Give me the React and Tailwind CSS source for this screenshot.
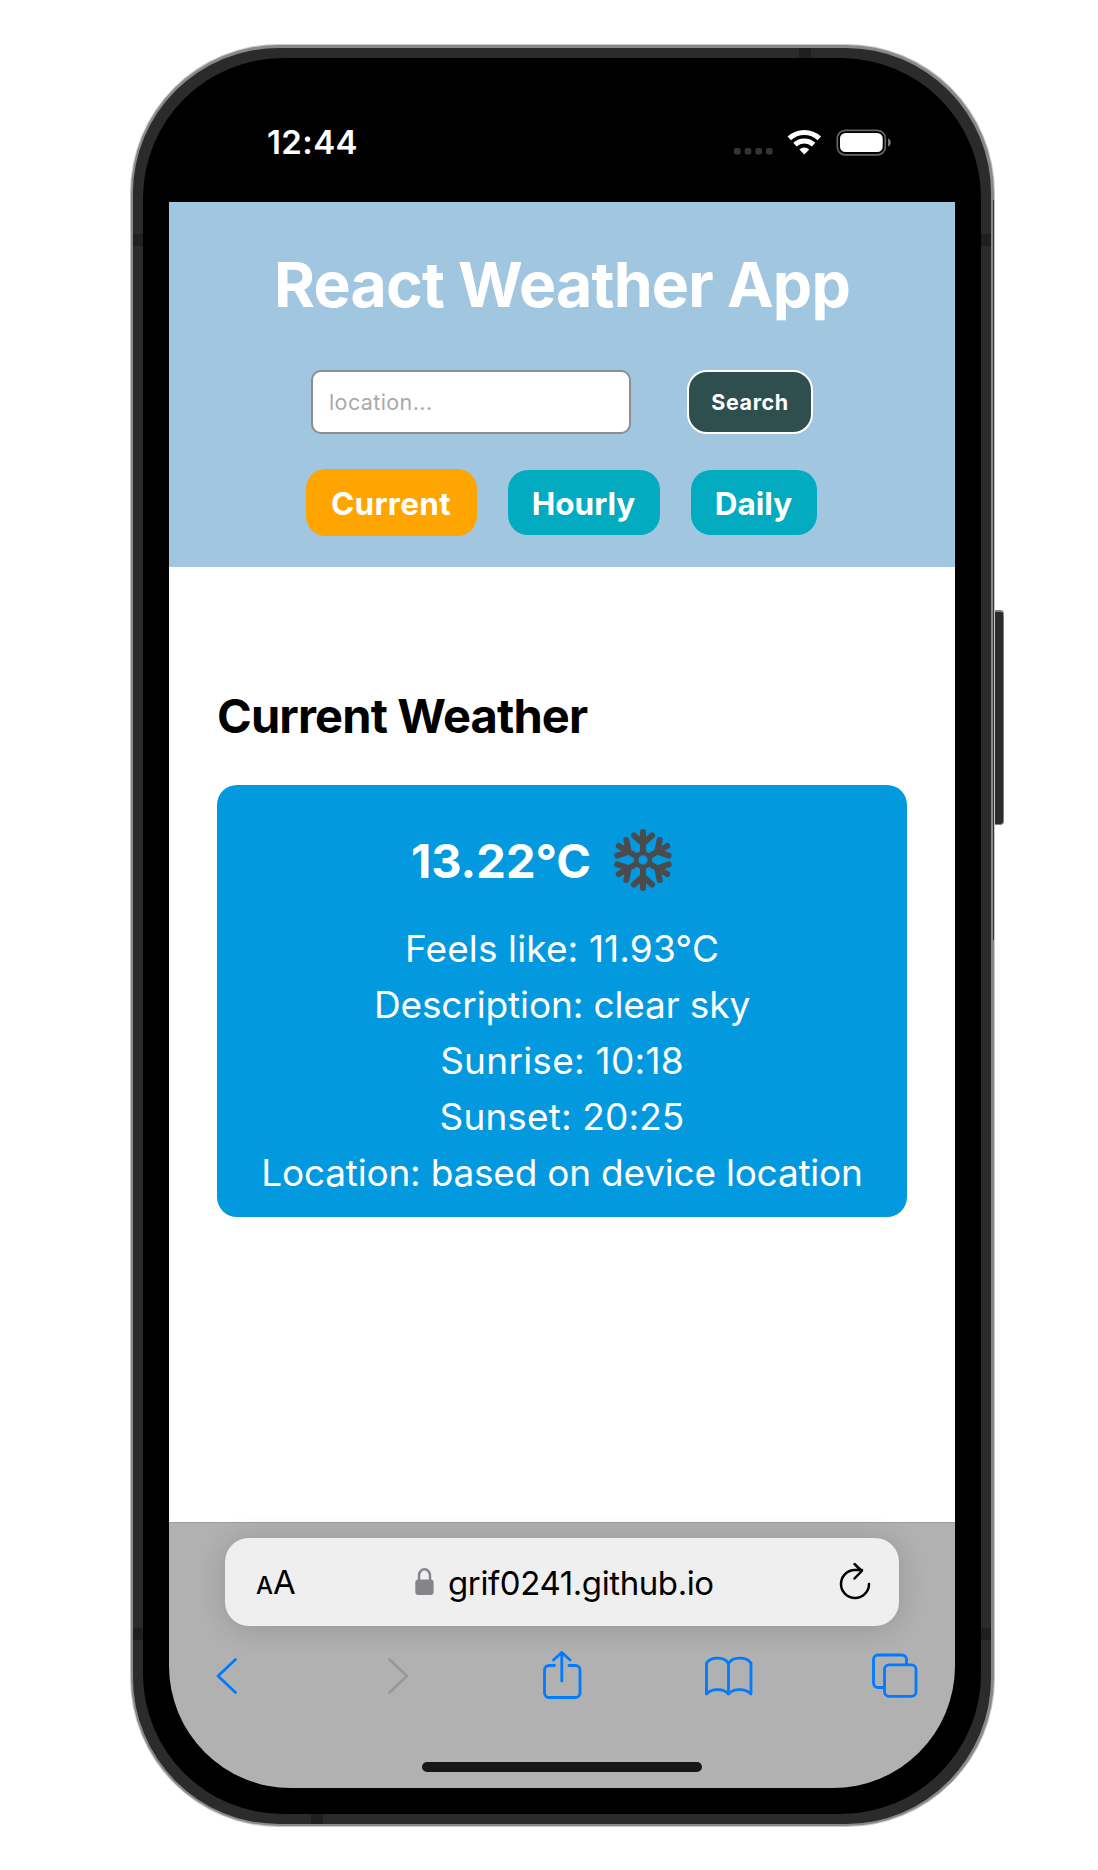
const DETAILS = [
  { text: "Feels like: 11.93°C", tracking: "tracking-[0.13px]" },
  { text: "Description: clear sky", tracking: "tracking-[-0.13px]" },
  { text: "Sunrise: 10:18", tracking: "tracking-[0.26px]" },
  { text: "Sunset: 20:25", tracking: "tracking-[0.12px]" },
  { text: "Location: based on device location", tracking: "tracking-[-0.22px]" },
];

function StatusBar() {
  return (
    <div className="flex h-[144px] items-start pl-[98px] pt-[67px] text-white">
      <span className="w-[92px] whitespace-nowrap text-[33px] font-semibold leading-[34px] tracking-[0.4px]">12:44</span>
      <svg className="ml-[374px] mt-[-1px]" width="160" height="36" viewBox="732 124 160 36" fill="none">
        {[733, 743.7, 754.4, 765].map((x) => (
          <rect key={x} x={x} y="148" width="6.6" height="6.6" rx="2" fill="#353535" />
        ))}
        <path d="M788.3 138.4a22 22 0 0 1 30 0" stroke="white" strokeWidth="5" />
        <path d="M794 144.6a13.7 13.7 0 0 1 18.6 0" stroke="white" strokeWidth="5" />
        <path d="M803.3 154.6l-4.9-5.2a7.2 7.2 0 0 1 9.8 0z" fill="white" />
        <rect x="836.3" y="130.3" width="48" height="24.6" rx="8" stroke="#666" strokeWidth="1.7" />
        <rect x="839" y="133" width="42.7" height="19" rx="5.5" fill="white" />
        <path d="M887 138.5v8c1.8-.5 2.8-2 2.8-4s-1-3.500-2.800-4z" fill="#777" />
      </svg>
    </div>
  );
}

function Header() {
  return (
    <header className="flex h-[365px] flex-col items-center bg-[#a1c6e0]">
      <h1 className="mt-[46px] whitespace-nowrap text-[62.5px] font-bold leading-[72px] tracking-[-0.8px] text-white">React Weather App</h1>
      <div className="mt-[50px] flex w-[502px] justify-between">
        <div className="flex h-[64px] w-[320px] items-center rounded-[10px] border-2 border-[#8d8d93] bg-white pl-[16px] text-[21.500px] tracking-[0.4px] text-[#a9a9a9]">location...</div>
        <button className="h-[64px] w-[126px] rounded-[20px] border-2 border-white bg-[#2f4f4f] pt-px text-[21.500px] font-bold tracking-[0.6px] text-white">Search</button>
      </div>
      <div className="mr-[2px] mt-[35px] flex w-[511px] items-center justify-between text-[31.5px] font-bold text-white">
        <button className="h-[67px] w-[171px] rounded-[20px] bg-[#ffa500] pt-[2px] tracking-[0.3px]">Current</button>
        <button className="h-[65px] w-[152px] rounded-[20px] bg-[#02abbf] pt-[2px]">Hourly</button>
        <button className="h-[65px] w-[126px] rounded-[20px] bg-[#02abbf] pt-[2px]">Daily</button>
      </div>
    </header>
  );
}

function Snowflake() {
  return (
    <svg width="62" height="66" viewBox="-31 -33 62 66" stroke="#4b4b4d" strokeWidth="6" strokeLinecap="round" fill="none">
      {["rotate(0)", "rotate(60)", "rotate(120)", "rotate(180)", "rotate(240)", "rotate(300)"].map((t) => (
        <path key={t} transform={t} d="M0 -8V-28M0 -16.500L-9 -24.500M0 -16.500L9 -24.500" />
      ))}
      <circle r="7" strokeWidth="4.500" />
    </svg>
  );
}

function WeatherCard() {
  return (
    <main className="h-[955px] bg-white px-12 pt-[121px]">
      <h2 className="whitespace-nowrap text-[47px] font-bold leading-[56px] tracking-[-0.85px] text-black">Current Weather</h2>
      <section className="mt-[41px] h-[432px] rounded-[20px] bg-[#0399df] pt-[42px] text-white">
        <div className="flex h-[66px] items-center pl-[194px]">
          <span className="w-[201px] whitespace-nowrap pt-[2px] text-[47px] font-bold leading-[56px]">13.22°C</span>
          <Snowflake />
        </div>
        <div className="mt-[28px] flex flex-col items-center text-[37px] leading-[56px]">
          {DETAILS.map((d) => (
            <p key={d.text} className={"whitespace-nowrap " + d.tracking}>{d.text}</p>
          ))}
        </div>
      </section>
    </main>
  );
}

function BrowserBar() {
  return (
    <footer className="h-[266px] border-t border-[#9c9c9c] bg-[#b1b1b1] pt-[15px]">
      <div className="mx-[56px] flex h-[88px] items-center rounded-[24px] bg-[#efefef] pl-[31px] pr-[25px] text-[33px] text-black shadow-[0_2px_28px_rgba(0,0,0,0.16)]">
        <span className="flex w-[159px] items-baseline pt-[2px]"><span className="text-[24px] font-medium">A</span><span className="text-[33px]">A</span></span>
        <svg width="19" height="28" viewBox="0 0 19 28" fill="none">
          <path d="M4 13V7.500a5.500 6.200 0 0 1 11 0V13" stroke="#858589" strokeWidth="2.400" />
          <rect x="0.300" y="11.500" width="18.300" height="15.500" rx="3" fill="#858589" />
        </svg>
        <span className="ml-[14px] w-[360px] whitespace-nowrap pt-[3px] tracking-[-0.4px]">grif0241.github.io</span>
        <svg className="-mt-1 ml-auto" width="36" height="40" viewBox="838 1560 36 40" fill="none" stroke="black" strokeWidth="2.500" strokeLinecap="round" strokeLinejoin="round">
          <path d="M869 1584a14 14 0 1 1-14-14h7M854.500 1564l7.300 7-7.300 7.500" />
        </svg>
      </div>
      <svg className="mt-[20px]" width="786" height="60" viewBox="169 1646 786 60" fill="none" stroke="#007aff" strokeWidth="2.800" strokeLinecap="round" strokeLinejoin="round">
        <path d="M235.500 1659.500L218 1676l17.500 16.500" />
        <path d="M389.500 1659.500L407 1676l-17.500 16.500" stroke="#999" />
        <path d="M554.500 1665.500H549a4.500 4.500 0 0 0-4.500 4.500v23a4.500 4.500 0 0 0 4.500 4.500h26.500a4.500 4.500 0 0 0 4.500-4.500v-23a4.500 4.500 0 0 0-4.500-4.500H569M561.800 1681v-28.500M553.500 1660l8.300-7.500 8.300 7.500" />
        <path d="M728.500 1663.500c-4-7-17-7-22-.5v31c5-5.500 17-6 22 0c5-6 17-5.500 22.500 0v-31c-5-6.500-18.500-6.500-22.500.5zV1694" />
        <path d="M883.700 1687.500H878a4.500 4.500 0 0 1-4.500-4.500v-23.500a4.500 4.500 0 0 1 4.500-4.500h24a4.500 4.500 0 0 1 4.500 4.500v5" />
        <rect x="884.500" y="1664.800" width="31.500" height="31.500" rx="4.500" />
      </svg>
      <div className="mx-auto mt-[56px] h-[10px] w-[280px] rounded-full bg-[#171717]" />
    </footer>
  );
}

export default function App() {
  return (
    <div className="h-[1870px] w-[1098px] overflow-hidden bg-white pl-[131px] pt-[45px] font-['Inter',sans-serif]">
      <div className="relative h-[1781px] w-[863px]">
        <div className="absolute left-[860px] top-[565px] h-[215px] w-[13px] rounded-r-[4px] border border-t-2 border-[#808080] bg-[#2b2b2b]" />
        <div className="relative h-full rounded-[148px] border-b-2 border-l-2 border-r-[3px] border-t-[3px] border-[#898989] bg-[#2b2b2b] p-[10px] shadow-[0_0_0_1px_#c8c8c8]">
          <div className="h-full rounded-[140px] bg-black px-[26px]">
            <StatusBar />
            <div className="overflow-hidden rounded-b-[122px]">
              <Header />
              <WeatherCard />
              <BrowserBar />
            </div>
          </div>
        </div>
        <div className="absolute left-[862px] top-[155px] h-[740px] w-px bg-[#333]" />
        <div className="absolute left-[2px] top-[189px] h-3 w-[10px] bg-[#1f1f1f]" />
        <div className="absolute right-[3px] top-[189px] h-3 w-[10px] bg-[#1f1f1f]" />
        <div className="absolute left-[2px] top-[1583px] h-3 w-[10px] bg-[#1f1f1f]" />
        <div className="absolute right-[3px] top-[1583px] h-3 w-[10px] bg-[#1f1f1f]" />
        <div className="absolute left-[668px] top-[3px] h-[10px] w-3 bg-[#1f1f1f]" />
        <div className="absolute bottom-[2px] left-[180px] h-[10px] w-3 bg-[#1f1f1f]" />
      </div>
    </div>
  );
}
